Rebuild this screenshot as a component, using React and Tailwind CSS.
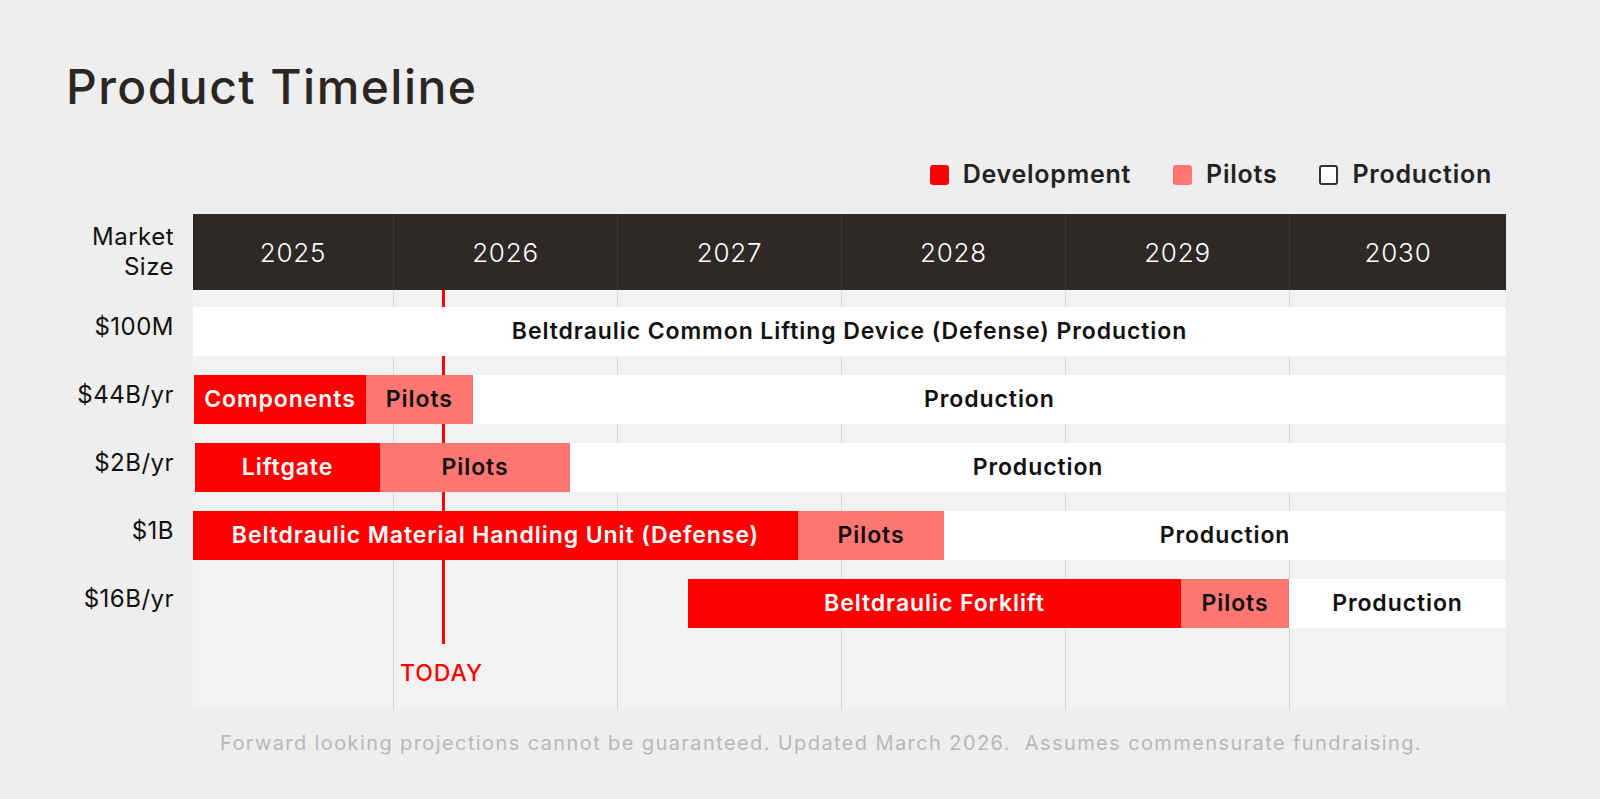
export default function App() {
  const years = [["2025",200],["2026",224],["2027",224],["2028",224],["2029",224],["2030",217]];
  const rows = [
    { label: "$100M", segs: [[0, 0], ["w", 1313, "Beltdraulic Common Lifting Device (Defense) Production"]] },
    { label: "$44B/yr", segs: [[1, 0], ["r", 172, "Components"], ["p", 107, "Pilots"], ["w", 1034, "Production"]] },
    { label: "$2B/yr", segs: [[2, 0], ["r", 185, "Liftgate"], ["p", 190, "Pilots"], ["w", 936, "Production"]] },
    { label: "$1B", segs: [[0, 0], ["r", 605, "Beltdraulic Material Handling Unit (Defense)"], ["p", 146, "Pilots"], ["w", 562, "Production"]] },
    { label: "$16B/yr", segs: [[495, 0], ["r", 493, "Beltdraulic Forklift"], ["p", 108, "Pilots"], ["w", 217, "Production"]] },
  ];
  const cls = { r: "bg-[#ff0000] text-white", p: "bg-[#ff7673] text-[#111]", w: "bg-white text-[#111]" };
  return (
    <div className="w-[1600px] h-[799px] bg-[#eeeeee] text-[#2b2623]" style={{ fontFamily: "Inter, 'Open Sans', sans-serif" }}>
      <div className="pl-[66px] pt-[58px] text-[48px] font-medium leading-[58px] tracking-[0.03em]">Product Timeline</div>
      <div className="flex justify-end items-center gap-[8px] pr-[108px] mt-[44px] h-[30px] text-[25px] font-semibold tracking-[0.03em] text-[#222]">
        <span className="w-[19px] h-[20px] rounded-[3px] bg-[#ff0000]" />
        <span className="mr-[34px] ml-[6px]">Development</span>
        <span className="w-[19px] h-[20px] rounded-[3px] bg-[#ff7673]" />
        <span className="mr-[34px] ml-[6px]">Pilots</span>
        <span className="w-[19px] h-[20px] rounded-[3px] bg-white border-2 border-[#333]" />
        <span className="ml-[6px]">Production</span>
      </div>
      <div className="flex mt-[24px]">
        <div className="w-[193px] shrink-0">
          <div className="h-[76px] pr-[19px] flex flex-col justify-center items-end text-[24px] leading-[30px] tracking-[0.02em] text-[#111]">
            <span>Market</span><span>Size</span>
          </div>
          <div className="pt-[17px] flex flex-col gap-[19px] pr-[19px]">
            {rows.map((r) => (
              <div key={r.label} className="h-[49px] flex items-start justify-end text-[24px] tracking-[0.02em] text-[#111] leading-[40px]">{r.label}</div>
            ))}
          </div>
        </div>
        <div className="w-[1313px] relative">
          <div className="flex h-[76px] bg-[#2e2926] text-white text-[26px] font-light tracking-[0.03em]">
            {years.map(([y, w], i) => (
              <div key={y} style={{ width: w }} className={"flex items-center justify-center " + (i ? "border-l border-[#3d3835]" : "")}>{y}</div>
            ))}
          </div>
          <div className="relative h-[420px] bg-[#f2f2f2]">
            <div className="absolute inset-0 flex">
              {years.map(([y, w], i) => (
                <div key={y} style={{ width: w }} className={i ? "border-l border-[#d8d8d8]" : ""} />
              ))}
            </div>
            <div className="absolute left-[249px] top-0 w-[3px] h-[354px] bg-[#ff0000]" />
            <div className="absolute left-[207px] top-[366px] text-[23px] font-medium tracking-[0.04em] text-[#ff0000]">TODAY</div>
            <div className="relative pt-[17px] flex flex-col gap-[19px]">
              {rows.map((r) => (
                <div key={r.label} className="h-[49px] flex">
                  <div style={{ width: r.segs[0][0] }} />
                  {r.segs.slice(1).map(([c, w, t]) => (
                    <div key={t + w} style={{ width: w }} className={"h-full flex items-center justify-center text-[23px] font-semibold tracking-[0.04em] whitespace-nowrap " + cls[c]}>{t}</div>
                  ))}
                </div>
              ))}
            </div>
          </div>
        </div>
      </div>
      <div className="text-center pl-[42px] mt-[18px] text-[20px] tracking-[0.07em] text-[#b8b8b8] whitespace-nowrap">Forward looking projections cannot be guaranteed. Updated March 2026.&nbsp; Assumes commensurate fundraising.</div>
    </div>
  );
}
